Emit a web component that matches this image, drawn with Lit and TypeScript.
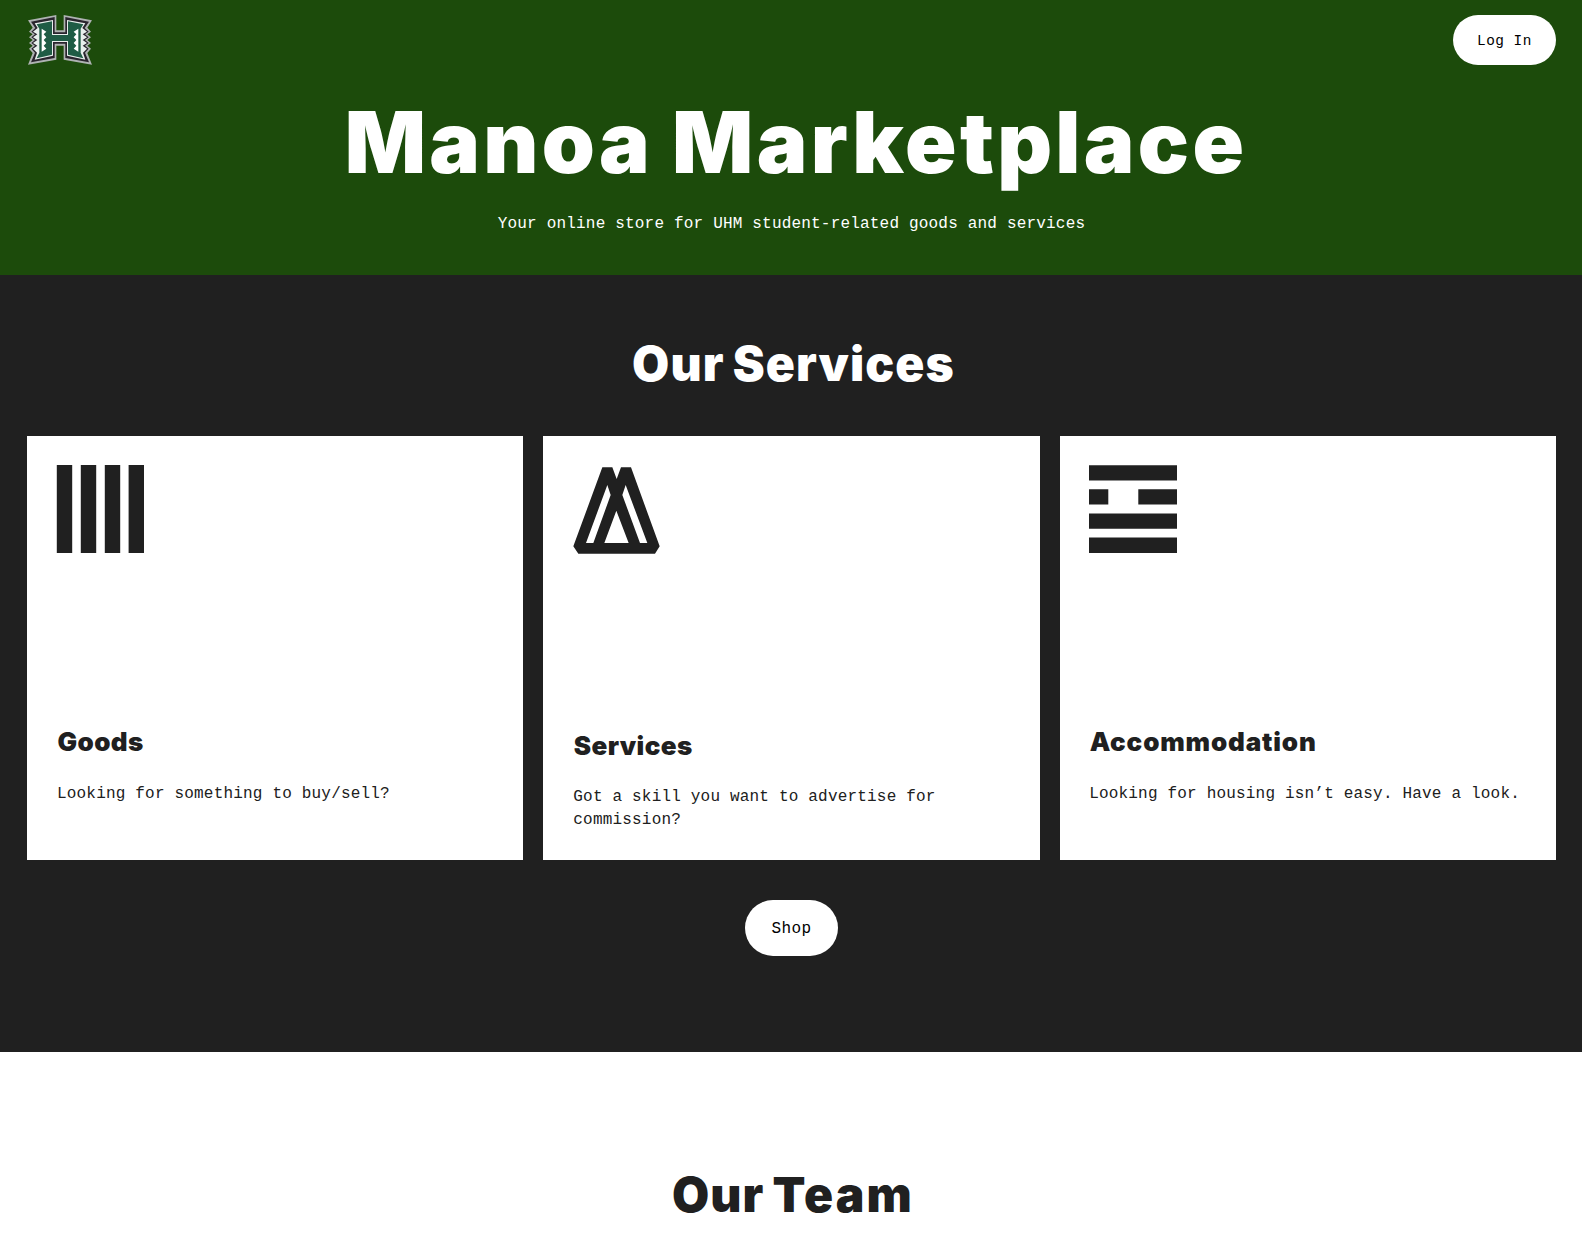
import { LitElement, html, css, svg } from "lit";
import { customElement } from "lit/decorators.js";

const bars = svg`<g fill="#202020"><path d="M-.2 0h15.4v88H-.2zM23.8 0h15.4v88H23.8zM47.8 0h15.4v88H47.8zM71.6 0h15.4v88H71.6z"/></g>`;
const peaks = svg`<path fill="#202020" fill-rule="evenodd" transform="scale(.33333) translate(-129 -105)" d="M217 112H247L260 147L273 112H303L389 349L375 371H145L130 349ZM232 165L168 339H190L242 195ZM259 242L223 339H296ZM287 165L277 195L330 339H352Z"/>`;
const rows = svg`<path fill="#202020" d="M0 .2h88v15.3H0zM0 24.3h19.3v15.3H0zM49.3 24.3H88v15.3H49.3zM0 48.4h88v15.3H0zM0 72.4h88V88H0z"/>`;

const cards = [
  { cls: "goods", title: "Goods", text: "Looking for something to buy/sell?", icon: bars },
  { cls: "services", title: "Services", text: "Got a skill you want to advertise for commission?", icon: peaks },
  { cls: "rooms", title: "Accommodation", text: "Looking for housing isn’t easy. Have a look.", icon: rows },
];

@customElement("app-root")
export class AppRoot extends LitElement {
  static styles = css`
    :host { display: block; height: 1244px; overflow: hidden; background: #fff; color: #202020;
      font: 16px/23px "Liberation Mono", monospace; letter-spacing: 0.19px; }
    h1, h2, h3, p { margin: 0; }
    h1, h2, h3 { font-family: Inter, sans-serif; font-weight: 900; white-space: nowrap; }
    .hero { height: 275px; background: #1c4b0b; color: #fff; text-align: center; }
    .nav { display: flex; justify-content: space-between; align-items: center; height: 80px; padding: 0 26px 0 28px; }
    .logo { width: 64px; height: 50px; display: block; }
    button { border: 0; background: #fff; color: #000; font-family: "Liberation Mono", monospace; padding: 2px 0 0; }
    .login { width: 103px; height: 50px; border-radius: 25px; font-size: 14.4px; letter-spacing: 0.5px; }
    h1 { display: flex; justify-content: center; gap: 19px; margin-top: 13px; padding-left: 10px; font-size: 85px; line-height: 100px; letter-spacing: 3.3px; }
    .tagline { margin-top: 20px; padding-left: 1px; }
    .offer { background: #202020; height: 777px; box-sizing: border-box; padding: 64px 26px 0 27px;
      display: flex; flex-direction: column; align-items: center; }
    h2 { font-size: 48px; line-height: 50px; letter-spacing: 1.1px; text-align: center; display: flex; justify-content: center; gap: 8px; padding-left: 4px; }
    .offer h2 { color: #fff; }
    .cards { display: grid; grid-template-columns: repeat(3, 1fr); gap: 20px; margin-top: 47px; width: 100%; height: 424px; }
    .card { background: #fff; padding: 29px 29px 0 30px; }
    .rooms { padding-left: 29.5px; }
    .icon { display: block; width: 88px; height: 88px; overflow: visible; }
    h3 { margin-top: 174px; font-size: 26px; line-height: 30px; letter-spacing: 0.4px; padding-left: 0.5px; }
    .rooms h3 { letter-spacing: 0.85px; }
    .card p { margin-top: 26px; }
    .services h3 { margin-top: 178px; }
    .services p { margin-top: 25px; }
    .shop { margin-top: 40px; width: 93px; height: 56px; border-radius: 28px; font-size: 16px; letter-spacing: 0.4px; }
    .team { padding-top: 118px; }
    .team .wide { letter-spacing: 2.2px; }
  `;

  render() {
    return html`
      <header class="hero">
        <nav class="nav">
          <svg class="logo" viewBox="24 21 192 150">
            <path fill="#aeb2b2" d="M24 37L109 21V67H131V21L216 37L202 59L213 71L202 79L213 88L202 96L213 105L202 113L213 122L202 135L216 170L131 155V113H109V155L24 170L38 135L27 122L38 113L27 105L38 96L27 88L38 79L27 71L38 59Z"/>
            <path fill="#29242d" d="M33 41L104 27V73H136V27L207 41L194 60L206 71L195 79L206 88L195 96L206 105L195 113L206 122L195 134L207 163L136 150V107H104V150L33 163L45 134L34 122L45 113L34 105L45 96L34 88L45 79L34 71L46 60Z"/>
            <path fill="#e8efec" d="M44 46L99 36V78H141V36L196 46L187 60L201 71L188 79L201 88L188 96L201 105L188 113L201 122L189 134L196 155L141 143V102H99V143L44 155L51 134L39 122L52 113L39 105L52 96L39 88L52 79L39 71L53 60Z"/>
            <path fill="#1f5c45" d="M50 49L96 40V81H144V40L190 49L182 62V134L190 151L144 140V99H96V140L50 151L58 134V62Z"/>
            <path fill="#fff" d="M65 62L79 71L71 79L79 88L71 96L79 105L71 113L79 122L65 131ZM175 62L161 71L169 79L161 88L169 96L161 105L169 113L161 122L175 131Z"/>
          </svg>
          <button class="login">Log In</button>
        </nav>
        <h1><span>Manoa</span> <span>Marketplace</span></h1>
        <p class="tagline">Your online store for UHM student-related goods and services</p>
      </header>
      <section class="offer">
        <h2><span>Our</span> <span>Services</span></h2>
        <div class="cards">
          ${cards.map((c) => html`<article class="card ${c.cls}">
            <svg class="icon" viewBox="0 0 88 88">${c.icon}</svg>
            <h3>${c.title}</h3>
            <p>${c.text}</p>
          </article>`)}
        </div>
        <button class="shop">Shop</button>
      </section>
      <section class="team"><h2><span>Our</span> <span class="wide">Team</span></h2></section>
    `;
  }
}
